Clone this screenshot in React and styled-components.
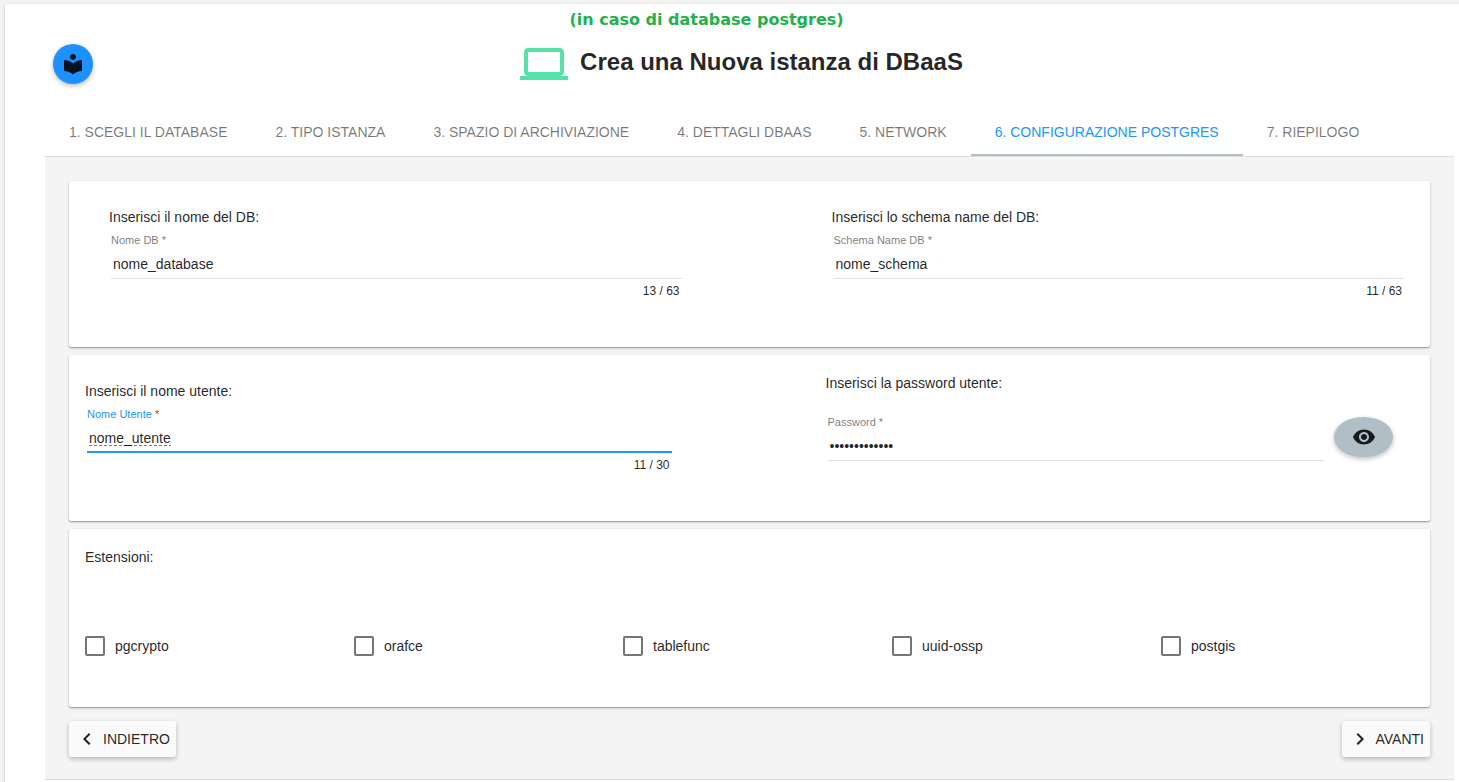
import { useState } from 'react';
import styled, { createGlobalStyle } from 'styled-components';
import { MdLocalLibrary, MdVisibility, MdChevronLeft, MdChevronRight } from 'react-icons/md';

const GlobalStyle = createGlobalStyle`
  * {
    box-sizing: border-box;
  }
  body {
    margin: 0;
    background: #f3f3f3;
    color: rgba(0, 0, 0, 0.87);
    font-family: 'Liberation Sans', Arial, sans-serif;
    font-size: 14px;
    line-height: 20px;
  }
`;

const Page = styled.main`
  min-height: calc(100vh - 4px);
  margin: 0 0 0 5px;
  padding: 0 5px 0 40px;
  background: #ffffff;
  border-top-left-radius: 2px;
  box-shadow: 0 1px 3px rgba(0, 0, 0, 0.2), 0 1px 1px rgba(0, 0, 0, 0.14);
`;

const Shell = styled.div`
  padding-top: 4px;
`;

const Note = styled.p`
  margin: 0;
  padding: 6px 86px 0 0;
  color: #22b14c;
  font-family: Verdana, 'DejaVu Sans', sans-serif;
  font-size: 16px;
  font-weight: 700;
  text-align: center;
`;

const Header = styled.header`
  display: flex;
  align-items: center;
  height: 68px;
  margin-bottom: 11px;
  padding: 0 64px 0 8px;
`;

const RoundButton = styled.button`
  display: flex;
  align-items: center;
  justify-content: center;
  flex: none;
  width: 40px;
  height: 40px;
  padding: 0;
  border: none;
  border-radius: 50%;
  background: #1e90ff;
  color: rgba(0, 0, 0, 0.87);
  font-size: 24px;
  box-shadow: 0 2px 5px rgba(0, 0, 0, 0.26);
  cursor: pointer;
`;

const VisibilityButton = styled(RoundButton)`
  width: 59px;
  margin-bottom: 4px;
  background: #b0bec5;
`;

const Title = styled.h1`
  display: flex;
  flex: 1;
  align-items: center;
  justify-content: center;
  gap: 12px;
  margin: 0;
  font-size: 24px;
  font-weight: 700;
  line-height: 28px;
`;

const TitleText = styled.span`
  padding-bottom: 4px;
`;

const Tabs = styled.nav`
  display: flex;
  border-bottom: 1px solid #dddddd;
`;

const Tab = styled.a`
  padding: 13px 24px 12px;
  border-bottom: 2px solid ${(props) => (props.$active ? '#b0bec5' : 'transparent')};
  color: ${(props) => (props.$active ? '#2196f3' : 'rgba(0, 0, 0, 0.54)')};
  text-decoration: none;
  text-transform: uppercase;
  white-space: nowrap;
`;

const Content = styled.form`
  display: flex;
  flex-direction: column;
  gap: 8px;
  padding: 24px 24px 22px;
  background: #f4f4f4;
  border-bottom: 1px solid #dddddd;
`;

const Card = styled.section`
  padding: ${(props) => props.$padding};
  background: #ffffff;
  border-radius: 2px;
  box-shadow: 0 1px 3px rgba(0, 0, 0, 0.2), 0 1px 1px rgba(0, 0, 0, 0.14), 0 1px 1px rgba(0, 0, 0, 0.12);
`;

const Columns = styled.div`
  display: grid;
  grid-template-columns: 1fr 1fr;
  column-gap: ${(props) => props.$gap};
`;

const Column = styled.div`
  padding-top: ${(props) => (props.$lowered ? '8px' : '0')};
`;

const Text = styled.p`
  margin: 0;
`;

const Field = styled.div`
  display: flex;
  flex: 1;
  flex-direction: column;
  padding: 5px 2px 0;
`;

const FieldLabel = styled.label`
  color: ${(props) => (props.$focused ? '#2196f3' : 'rgba(0, 0, 0, 0.54)')};
  font-size: 11px;
  line-height: 16px;
`;

const Star = styled.span`
  color: ${(props) => (props.$focused ? '#dd2c00' : 'inherit')};
`;

// the focused field also gets the red spelling mark under its word
const spelling = 'repeating-linear-gradient(90deg, #ff4040 0 3px, transparent 3px 5px) 2px 23px / 82px 1px no-repeat';

const TextInput = styled.input`
  width: 100%;
  height: 31px;
  padding: 2px 2px ${(props) => (props.$focused ? '0' : '1px')};
  border: none;
  border-bottom: ${(props) => (props.$focused ? '2px solid #2196f3' : '1px solid #e0e0e0')};
  outline: none;
  background: ${(props) => (props.$focused ? spelling : 'none')};
  color: rgba(0, 0, 0, 0.87);
  font-family: inherit;
  font-size: 14px;
`;

const Counter = styled.span`
  padding: 2px 2px 0 0;
  font-size: 12px;
  text-align: right;
`;

const PasswordRow = styled.div`
  display: flex;
  align-items: flex-end;
  gap: 8px;
  padding: 16px 21px 0 0;
`;

const Extensions = styled.div`
  display: grid;
  grid-template-columns: repeat(5, 1fr);
  padding-top: 69px;
`;

const Extension = styled.label`
  display: flex;
  align-items: center;
  gap: 10px;
`;

const Checkbox = styled.input`
  appearance: none;
  width: 20px;
  height: 20px;
  margin: 0;
  border: 2px solid #757575;
  border-radius: 2px;
  background: #ffffff;
  &:checked {
    background: #2196f3;
    border-color: #2196f3;
  }
`;

const Actions = styled.div`
  display: flex;
  justify-content: space-between;
  padding-top: 6px;
`;

const ActionButton = styled.button`
  display: flex;
  align-items: center;
  gap: 4px;
  height: 36px;
  padding: 0 6px;
  border: none;
  border-radius: 3px;
  background: #fafafa;
  color: rgba(0, 0, 0, 0.87);
  font-family: inherit;
  font-size: 14px;
  text-transform: uppercase;
  box-shadow: 0 2px 5px rgba(0, 0, 0, 0.26);
  cursor: pointer;
`;

const tabs = [
  '1. Scegli il database',
  '2. Tipo istanza',
  '3. Spazio di archiviazione',
  '4. Dettagli DBaaS',
  '5. Network',
  '6. Configurazione Postgres',
  '7. Riepilogo',
];

const extensions = ['pgcrypto', 'orafce', 'tablefunc', 'uuid-ossp', 'postgis'];

function LaptopIcon() {
  return (
    <svg width="48" height="48" viewBox="0 0 24 24" fill="#56e2a9" aria-hidden="true">
      <path d="M20 18c1.1 0 1.99-.9 1.99-2L22 6c0-1.1-.9-2-2-2H4c-1.1 0-2 .9-2 2v10c0 1.1.9 2 2 2H0v2h24v-2h-4zM4.4 6h15.2q.4 0 .4.4v9.2q0 .4-.4.4H4.4q-.4 0-.4-.4V6.4q0-.4.4-.4z" />
    </svg>
  );
}

function InputField({ id, label, type = 'text', initial, max, focused }) {
  const [value, setValue] = useState(initial);
  return (
    <Field>
      <FieldLabel htmlFor={id} $focused={focused}>
        {label} <Star $focused={focused}>*</Star>
      </FieldLabel>
      <TextInput
        id={id}
        type={type}
        value={value}
        maxLength={max}
        spellCheck={false}
        autoComplete="off"
        $focused={focused}
        onChange={(e) => setValue(e.target.value)}
      />
      {max && <Counter>{value.length} / {max}</Counter>}
    </Field>
  );
}

function App() {
  const [visible, setVisible] = useState(false);

  return (
    <Shell>
      <GlobalStyle />
      <Page>
        <Note>(in caso di database postgres)</Note>
        <Header>
          <RoundButton type="button" aria-label="Guida">
            <MdLocalLibrary />
          </RoundButton>
          <Title>
            <LaptopIcon />
            <TitleText>Crea una Nuova istanza di DBaaS</TitleText>
          </Title>
        </Header>
        <Tabs>
          {tabs.map((tab, i) => (
            <Tab key={tab} href={`#step-${i + 1}`} $active={i === 5}>{tab}</Tab>
          ))}
        </Tabs>
        <Content onSubmit={(e) => e.preventDefault()}>
          <Card $padding="26px 24px 46px 40px">
            <Columns $gap="148px">
              <Column>
                <Text>Inserisci il nome del DB:</Text>
                <InputField id="db-name" label="Nome DB" initial="nome_database" max={63} />
              </Column>
              <Column>
                <Text>Inserisci lo schema name del DB:</Text>
                <InputField id="schema-name" label="Schema Name DB" initial="nome_schema" max={63} />
              </Column>
            </Columns>
          </Card>
          <Card $padding="18px 16px 46px">
            <Columns $gap="152px">
              <Column $lowered>
                <Text>Inserisci il nome utente:</Text>
                <InputField id="user-name" label="Nome Utente" initial="nome_utente" max={30} focused />
              </Column>
              <Column>
                <Text>Inserisci la password utente:</Text>
                <PasswordRow>
                  <InputField
                    id="password"
                    label="Password"
                    type={visible ? 'text' : 'password'}
                    initial="nome_password"
                  />
                  <VisibilityButton
                    type="button"
                    aria-label="Mostra password"
                    onClick={() => setVisible(!visible)}
                  >
                    <MdVisibility />
                  </VisibilityButton>
                </PasswordRow>
              </Column>
            </Columns>
          </Card>
          <Card $padding="18px 0 51px 16px">
            <Text>Estensioni:</Text>
            <Extensions>
              {extensions.map((name) => (
                <Extension key={name}>
                  <Checkbox type="checkbox" name={name} />
                  {name}
                </Extension>
              ))}
            </Extensions>
          </Card>
          <Actions>
            <ActionButton type="button">
              <MdChevronLeft size={24} />
              Indietro
            </ActionButton>
            <ActionButton type="button">
              <MdChevronRight size={24} />
              Avanti
            </ActionButton>
          </Actions>
        </Content>
      </Page>
    </Shell>
  );
}

export default App;
